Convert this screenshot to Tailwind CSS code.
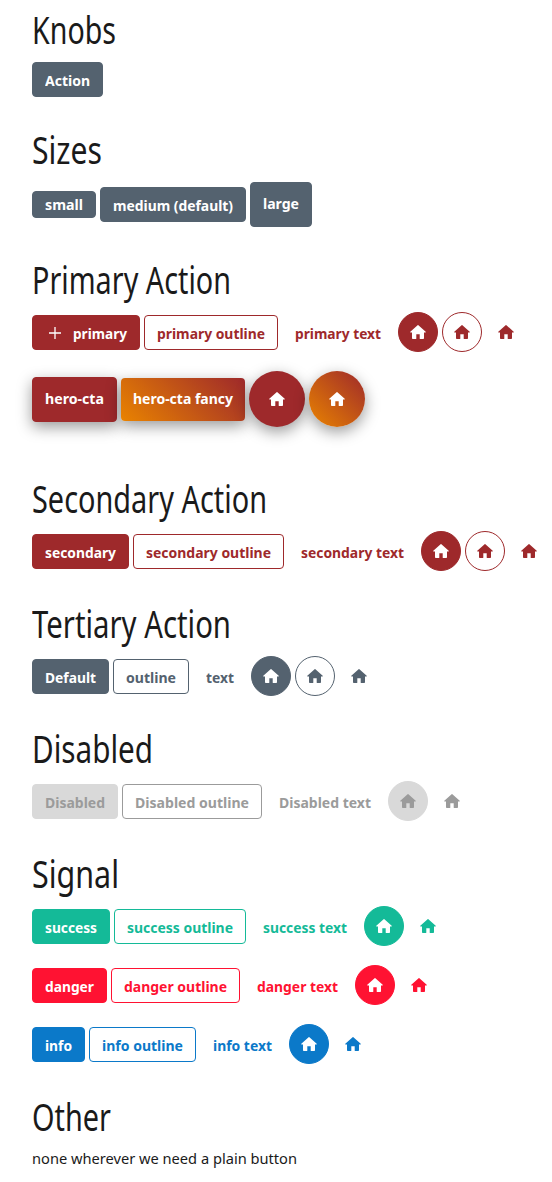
<!DOCTYPE html>
<html lang="en">
<head>
<meta charset="utf-8">
<title>Buttons</title>
<script src="https://cdn.jsdelivr.net/npm/@tailwindcss/browser@4"></script>
</head>
<body class="bg-white pt-[5px] px-8 w-[552px] h-[1182px] overflow-hidden text-[#1a1a1a] font-['Noto_Sans','Open_Sans',sans-serif]">
<svg class="hidden">
  <symbol id="home" viewBox="0 0 16 14"><path fill="currentColor" d="M7.600.2a.6.6 0 0 1 .8 0L15.700 6.700c.3.3.2.7-.2.7H14V13.200a.8.8 0 0 1-.8.8H10.300a.6.6 0 0 1-.6-.6V9.200H6.300v4.200a.6.6 0 0 1-.6.6H2.800a.8.8 0 0 1-.8-.8V7.400H.5C.1 7.400 0 7 .3 6.700z"/></symbol>
</svg>
<main id="page" class="flex flex-col"></main>
<script>
const HEAD = "h-12 leading-[48px] text-[39px] mb-[9px] whitespace-nowrap font-stretch-condensed";
const ROW = "flex items-start gap-1 w-max";
const BTN = "shrink-0 rounded-[4px] border flex items-center justify-center font-bold text-[15px] font-stretch-semi-condensed whitespace-nowrap";
const MD = " h-[35px] pt-[1px]";
const CIRCLE = "shrink-0 size-10 rounded-full border flex items-center justify-center";
const HERO = "shrink-0 size-14 rounded-full flex items-center justify-center text-white shadow-[0_5px_15px_rgba(0,0,0,0.4)]";
const home = '<svg class="w-4 h-3.5"><use href="#home"/></svg>';
const tones = {
  red:   ["bg-[#9e292b] border-[#9e292b] text-white", "border-[#9e292b] text-[#9e292b]", "border-transparent text-[#9e292b]"],
  slate: ["bg-[#54626f] border-[#54626f] text-white", "border-[#54626f] text-[#54626f]", "border-transparent text-[#54626f]"],
  gray:  ["bg-[#d9d9d9] border-[#d9d9d9] text-[#9b9b9b]", "border-[#9b9b9b] text-[#9b9b9b]", "border-transparent text-[#9b9b9b]"],
  green: ["bg-[#14ba98] border-[#14ba98] text-white", "border-[#14ba98] text-[#14ba98]", "border-transparent text-[#14ba98]"],
  pink:  ["bg-[#ff1232] border-[#ff1232] text-white", "border-[#ff1232] text-[#ff1232]", "border-transparent text-[#ff1232]"],
  blue:  ["bg-[#0b79c9] border-[#0b79c9] text-white", "border-[#0b79c9] text-[#0b79c9]", "border-transparent text-[#0b79c9]"]
};
const fit = (t, w) => `<span class="flex" style="width:${w}px"><span data-fit="${w}" class="block shrink-0 w-max origin-left">${t}</span></span>`;
const btn = (t, w, c, pad = 26, lead = "") => `<button class="${BTN} ${c}" style="width:${w + pad}px">${lead}${fit(t, w)}</button>`;
const circles = (tone, kinds) => kinds.map(k => `<button class="${CIRCLE} ${tones[tone][k]}">${home}</button>`).join("");
const set = (tone, items, kinds) => items.map(([t, w], i) => btn(t, w, tones[tone][i] + MD + " mt-[3px]")).join("") + circles(tone, kinds);
const plus = '<svg class="w-3 h-3 mr-3 ml-1" viewBox="0 0 12 12"><path d="M6 0v12M0 6h12" stroke="currentColor" stroke-width="1.300"/></svg>';
const section = (t, w, rows, cls = "mb-7") => `<section class="${cls}"><h1 class="${HEAD}">${fit(t, w)}</h1><div class="flex flex-col gap-[19px]">${rows.map(r => `<div class="${ROW}">${r}</div>`).join("")}</div></section>`;
const S = tones.slate[0], R = tones.red[0];
const lift = " pb-[2px] shadow-[0_5px_15px_rgba(0,0,0,0.4)]";
document.getElementById("page").innerHTML =
  section("Knobs", 84, [btn("Action", 45, S + MD)]) +
  section("Sizes", 70, [btn("small", 38, S + " h-[27px] mt-[9px]") + btn("medium (default)", 120, S + MD + " mt-[5px]") + btn("large", 36, S + " h-[45px] pb-[2px]")]) +
  section("Primary Action", 199, [
    btn("primary", 54, R + MD + " mt-[3px]", 54, plus) + btn("primary outline", 108, tones.red[1] + MD + " mt-[3px]") + btn("primary text", 86, tones.red[2] + MD + " mt-[3px]") + circles("red", [0, 1, 2]),
    btn("hero-cta", 59, R + " h-[45px] mt-[6px]" + lift) +
    btn("hero-cta fancy", 100, "border-0 text-white h-[43px] mt-[7px] bg-[linear-gradient(45deg,#e98300,#9e292b)]" + lift, 24) +
    `<button class="${HERO} bg-[#9e292b]">${home}</button><button class="${HERO} bg-[linear-gradient(45deg,#e98300,#9e292b)]">${home}</button>`
  ], "mb-[47px]") +
  section("Secondary Action", 235, [set("red", [["secondary", 71], ["secondary outline", 125], ["secondary text", 103]], [0, 1, 2])]) +
  section("Tertiary Action", 199, [set("slate", [["Default", 51], ["outline", 50], ["text", 28]], [0, 1, 2])]) +
  section("Disabled", 121, [set("gray", [["Disabled", 60], ["Disabled outline", 114], ["Disabled text", 92]], [0, 2])]) +
  section("Signal", 87, [
    set("green", [["success", 52], ["success outline", 106], ["success text", 84]], [0, 2]),
    set("pink", [["danger", 49], ["danger outline", 103], ["danger text", 81]], [0, 2]),
    set("blue", [["info", 27], ["info outline", 81], ["info text", 59]], [0, 2])
  ]) +
  section("Other", 79, [`<button class="text-[15px] leading-[18px] font-stretch-semi-condensed whitespace-nowrap">${fit("none wherever we need a plain button", 265)}</button>`], "");
const watcher = new ResizeObserver(entries => entries.forEach(({ target, contentRect }) => {
  target.style.transform = `scaleX(${target.dataset.fit / contentRect.width})`;
}));
document.querySelectorAll("[data-fit]").forEach(e => watcher.observe(e));
</script>
</body>
</html>
